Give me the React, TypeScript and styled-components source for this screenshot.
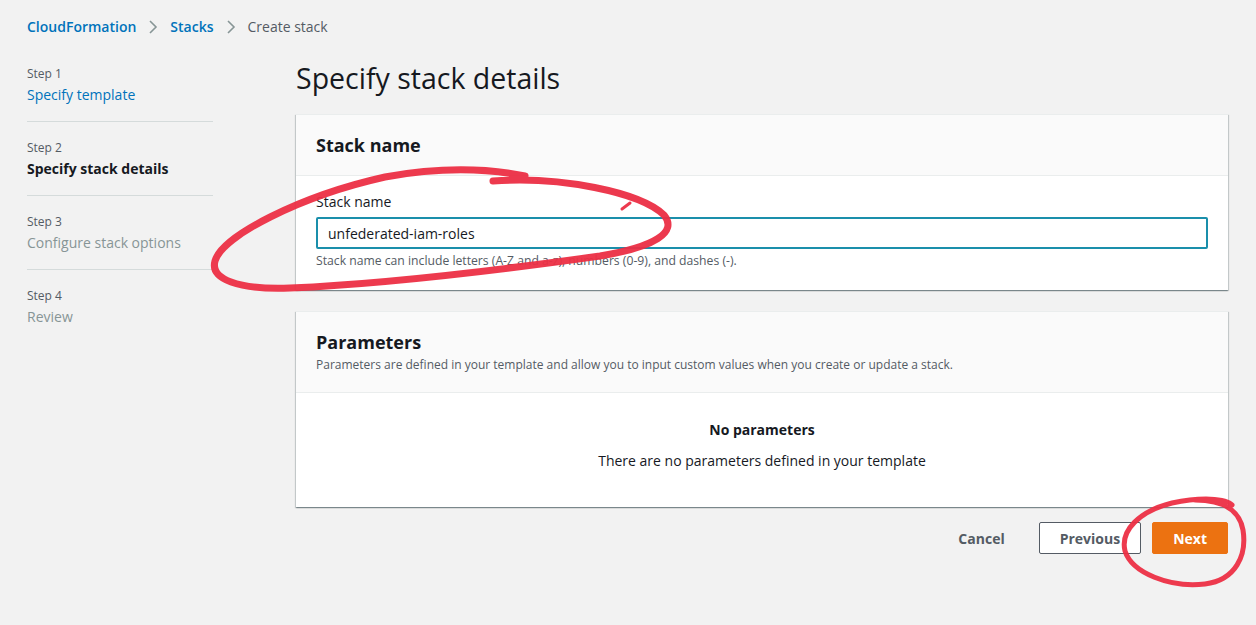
import React from "react";
import styled, { createGlobalStyle } from "styled-components";

const Global = createGlobalStyle`
  html, body { margin: 0; padding: 0; background: #f2f2f2; }
  body {
    font-family: "Open Sans", "Liberation Sans", Arial, sans-serif;
    color: #16191f;
    -webkit-font-smoothing: antialiased;
  }
  * { box-sizing: border-box; }
`;

const Page = styled.div`
  position: relative;
  width: 1256px;
  min-height: 625px;
  padding: 0 28px 0 27px;
  background: #f2f2f2;
`;

const Breadcrumbs = styled.nav`
  display: flex;
  align-items: center;
  gap: 12px;
  height: 48px;
  padding-top: 17px;
  padding-bottom: 11px;
  font-size: 14px;
  line-height: 20px;
`;

const Crumb = styled.span<{ $current?: boolean }>`
  color: ${(p) => (p.$current ? "#545b64" : "#0073bb")};
  font-weight: ${(p) => (p.$current ? 400 : 600)};
`;

const Sep = styled.span`
  display: flex;
  align-items: center;
  color: #879596;
`;

const Main = styled.div`
  display: grid;
  grid-template-columns: 186px 1fr;
  column-gap: 83px;
`;

const Steps = styled.ol`
  list-style: none;
  margin: 0;
  padding: 0;
`;

const Step = styled.li<{ $last?: boolean }>`
  padding: 18px 0 16px;
  border-bottom: ${(p) => (p.$last ? "none" : "1px solid #d5dbdb")};
  display: flex;
  flex-direction: column;
  gap: 3px;
`;

const StepLabel = styled.span`
  font-size: 12px;
  line-height: 16px;
  color: #545b64;
`;

const StepTitle = styled.span<{ $state: "link" | "active" | "disabled" }>`
  font-size: 14px;
  line-height: 20px;
  white-space: nowrap;
  color: ${(p) =>
    p.$state === "link" ? "#0073bb" : p.$state === "active" ? "#16191f" : "#879596"};
  font-weight: ${(p) => (p.$state === "active" ? 700 : 400)};
`;

const Content = styled.div`
  padding-top: 12px;
  display: flex;
  flex-direction: column;
`;

const Heading = styled.h1`
  margin: 0 0 18px;
  font-size: 28.5px;
  line-height: 36px;
  font-weight: 400;
  color: #16191f;
`;

const Panel = styled.section`
  background: #fff;
  border-top: 1px solid #eaeded;
  box-shadow: 0 1px 1px 0 rgba(0, 28, 36, 0.3), 1px 1px 1px 0 rgba(0, 28, 36, 0.15),
    -1px 1px 1px 0 rgba(0, 28, 36, 0.15);
  margin-bottom: 21px;
`;

const PanelHeader = styled.header`
  background: #fafafa;
  border-bottom: 1px solid #eaeded;
  padding: 19px 20px 19px;
  display: flex;
  flex-direction: column;
  gap: 4px;
`;

const PanelTitle = styled.h2`
  margin: 0;
  font-size: 18px;
  line-height: 22px;
  font-weight: 700;
  color: #16191f;
`;

const PanelDesc = styled.p`
  margin: 0;
  font-size: 12px;
  line-height: 16px;
  color: #545b64;
`;

const PanelBody = styled.div`
  padding: 16px 20px 21px;
`;

const FieldLabel = styled.label`
  display: block;
  font-size: 14px;
  line-height: 20px;
  color: #16191f;
  margin-bottom: 5px;
`;

const Input = styled.input`
  display: block;
  width: 100%;
  height: 32px;
  padding: 0 10px;
  border: 2px solid #1a8fab;
  border-radius: 2px;
  font-family: inherit;
  font-size: 14px;
  color: #16191f;
  background: #fff;
  outline: none;
`;

const Hint = styled.p`
  margin: 4px 0 0;
  font-size: 12.2px;
  line-height: 16px;
  color: #545b64;
`;

const Empty = styled.div`
  padding: 27px 20px 36px;
  display: flex;
  flex-direction: column;
  align-items: center;
  gap: 11px;
  text-align: center;
`;

const EmptyTitle = styled.strong`
  font-size: 14px;
  line-height: 20px;
  font-weight: 700;
`;

const EmptyText = styled.span`
  font-size: 14px;
  line-height: 20px;
`;

const Actions = styled.div`
  display: flex;
  justify-content: flex-end;
  align-items: center;
  gap: 11px;
  margin-top: -6px;
`;

const Button = styled.button<{ $variant: "link" | "normal" | "primary" }>`
  height: 32px;
  padding: 0 20px;
  border-radius: 2px;
  font-family: inherit;
  font-size: 14px;
  font-weight: 700;
  cursor: pointer;
  border: 1px solid
    ${(p) => (p.$variant === "normal" ? "#545b64" : p.$variant === "primary" ? "#ec7211" : "transparent")};
  background: ${(p) => (p.$variant === "primary" ? "#ec7211" : p.$variant === "normal" ? "#fff" : "transparent")};
  color: ${(p) => (p.$variant === "primary" ? "#fff" : "#545b64")};
  margin-right: ${(p) => (p.$variant === "link" ? "2px" : "0")};
`;

const Annotations = styled.svg`
  position: absolute;
  left: 0;
  top: 0;
  width: 1256px;
  height: 625px;
  pointer-events: none;
`;

const Chevron = () => (
  <svg width="10" height="16" viewBox="0 0 10 16">
    <path d="M2 2 L8 8 L2 14" fill="none" stroke="#879596" strokeWidth="1.6" />
  </svg>
);

export default function App() {
  return (
    <>
      <Global />
      <Page>
        <Breadcrumbs>
          <Crumb>CloudFormation</Crumb>
          <Sep><Chevron /></Sep>
          <Crumb>Stacks</Crumb>
          <Sep><Chevron /></Sep>
          <Crumb $current>Create stack</Crumb>
        </Breadcrumbs>
        <Main>
          <Steps>
            <Step>
              <StepLabel>Step 1</StepLabel>
              <StepTitle $state="link">Specify template</StepTitle>
            </Step>
            <Step>
              <StepLabel>Step 2</StepLabel>
              <StepTitle $state="active">Specify stack details</StepTitle>
            </Step>
            <Step>
              <StepLabel>Step 3</StepLabel>
              <StepTitle $state="disabled">Configure stack options</StepTitle>
            </Step>
            <Step $last>
              <StepLabel>Step 4</StepLabel>
              <StepTitle $state="disabled">Review</StepTitle>
            </Step>
          </Steps>
          <Content>
            <Heading>Specify stack details</Heading>
            <Panel>
              <PanelHeader>
                <PanelTitle>Stack name</PanelTitle>
              </PanelHeader>
              <PanelBody>
                <FieldLabel htmlFor="stackname">Stack name</FieldLabel>
                <Input id="stackname" defaultValue="unfederated-iam-roles" />
                <Hint>Stack name can include letters (A-Z and a-z), numbers (0-9), and dashes (-).</Hint>
              </PanelBody>
            </Panel>
            <Panel>
              <PanelHeader>
                <PanelTitle>Parameters</PanelTitle>
                <PanelDesc>
                  Parameters are defined in your template and allow you to input custom values when you create or update a stack.
                </PanelDesc>
              </PanelHeader>
              <Empty>
                <EmptyTitle>No parameters</EmptyTitle>
                <EmptyText>There are no parameters defined in your template</EmptyText>
              </Empty>
            </Panel>
            <Actions>
              <Button $variant="link">Cancel</Button>
              <Button $variant="normal">Previous</Button>
              <Button $variant="primary">Next</Button>
            </Actions>
          </Content>
        </Main>
        <Annotations viewBox="0 0 1256 625">
          <g fill="none" stroke="#ec2f45" strokeLinecap="round" strokeLinejoin="round" opacity="0.95">
            <path
              d="M 493 181 C 560 176, 640 192, 664 215 C 678 232, 655 247, 600 256 C 500 270, 380 284, 290 288 C 238 290, 210 279, 215 261 C 222 236, 300 196, 385 177 C 435 168, 485 168, 525 176"
              strokeWidth="7"
            />
            <path d="M 622 209 L 630 203" strokeWidth="3" />
            <path
              d="M 1232 505 C 1226 498, 1200 497, 1172 503 C 1140 511, 1120 530, 1125 551 C 1132 573, 1170 588, 1205 584 C 1236 580, 1247 555, 1243 530 C 1240 512, 1225 500, 1195 500"
              strokeWidth="5"
            />
          </g>
        </Annotations>
      </Page>
    </>
  );
}
